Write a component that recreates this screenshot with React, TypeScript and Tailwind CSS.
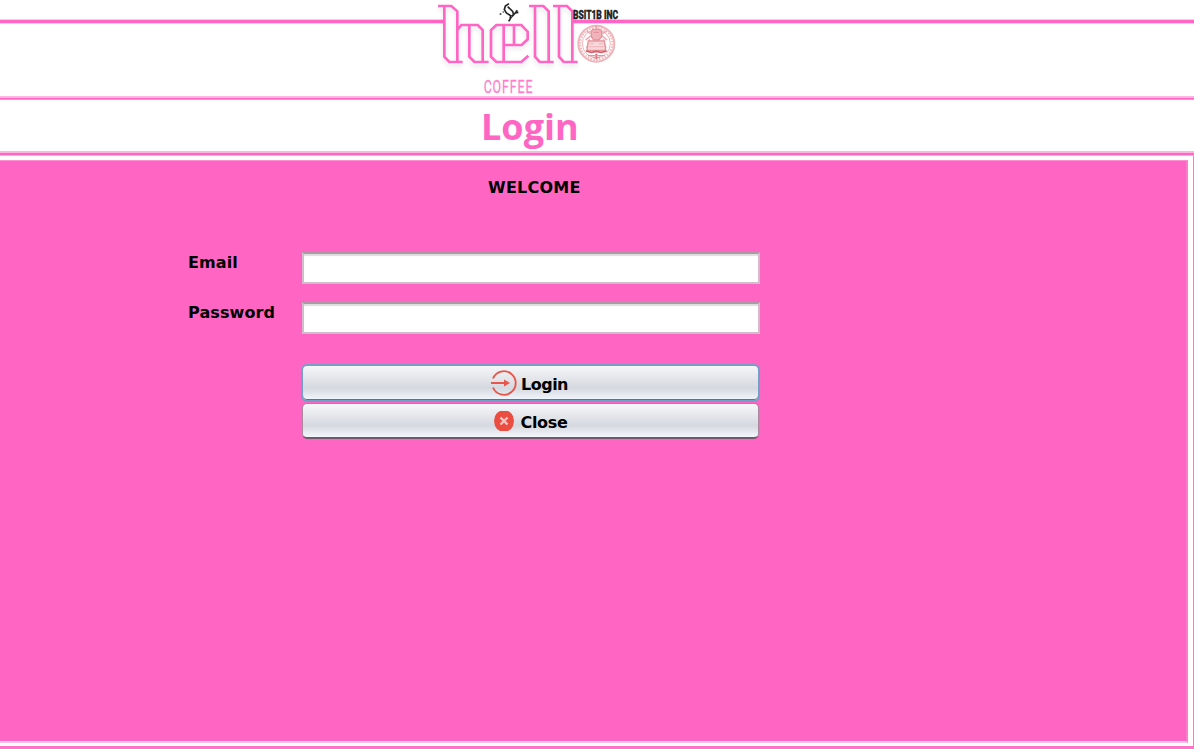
import React from 'react';

function Logo() {
  return (
    <svg className="absolute left-[430px] top-0 h-24 w-[200px] overflow-visible" viewBox="0 0 600 288" fill="none">
      <defs>
        <filter id="logoShadow" x="-10%" y="-10%" width="120%" height="130%">
          <feDropShadow dx="0" dy="10" stdDeviation="6" floodColor="#000" floodOpacity="0.09" />
        </filter>
      </defs>
      <g stroke="#ff66c4" strokeWidth="8" filter="url(#logoShadow)">
        <path d="M24 18H64L82 34V186M43 18V170L58 186H98M82 90L94 75H143L158 90V186M118 75V170L133 186H176" />
        <path d="M295 167L274 186H199L183 170V90L199 75H274L293 95V118L275 135H221M221 75V186M252 75V135" />
        <path d="M297 18H340L356 34V186M315 18V170L329 186H371" />
        <path d="M369 18H411L427 34V186M387 18V170L401 186H443" />
      </g>
      <g stroke="#252525" strokeWidth="5">
        <path d="M237 11L226 18L223 29L229 39L242 47L241 56L236 64" />
        <path d="M233 20L248 34L251 44L240 55M244 49L254 41L262 31M255 39L265 37" />
        <path d="M209 42H214M218 36H221" />
      </g>
      <text x="429" y="57" fill="#202020" stroke="#202020" strokeWidth="1.4" fontFamily="Roboto, sans-serif" fontWeight="800" fontSize="36" textLength="135" lengthAdjust="spacingAndGlyphs">BSIT1B INC</text>
      <text x="161" y="278" fill="#ff7dcc" stroke="#ff7dcc" strokeWidth="0.8" fontFamily="Roboto, sans-serif" fontWeight="400" fontSize="57" letterSpacing="4" textLength="149" lengthAdjust="spacingAndGlyphs">COFFEE</text>
      <g stroke="#e6949c">
        <circle cx="499" cy="131" r="54" strokeWidth="6" opacity="0.7" />
        <circle cx="499" cy="131" r="49" stroke="#f4bdc2" strokeWidth="8" strokeDasharray="5 4" />
        <circle cx="499" cy="131" r="42" strokeWidth="3" opacity="0.7" />
        <path d="M484 94L489 88H509L515 94V110L507 120H491L484 110ZM491 97H507" fill="#f0b3b9" strokeWidth="4" />
        <path d="M483 107L467 120M515 107L531 120M479 118L470 145M519 118L528 145M499 76V87M470 93L482 101M529 93L516 101" strokeWidth="5" opacity="0.7" />
        <path d="M475 123H523L527 151H471Z" fill="#f8d7da" strokeWidth="4" />
        <path d="M479 131H491M507 131H519M477 140H521" strokeWidth="3" opacity="0.5" />
        <path d="M468 153L484 157L499 154L514 157L530 153M499 161V178" stroke="#d75b69" strokeWidth="5" />
        <path d="M474 167H524M488 173H510" strokeWidth="4" />
      </g>
    </svg>
  );
}

function LoginIcon() {
  return (
    <svg className="h-[26px] w-[26px]" viewBox="0 0 26 26" fill="none" stroke="#ea5549" strokeWidth="1.9">
      <path d="M2 8.5A11.8 11.8 0 1 1 2 17.5M0 13H17" />
      <path d="M13 9.5L19 13L13 16.5Z" fill="#ea5549" stroke="none" />
    </svg>
  );
}

function CloseIcon() {
  return (
    <svg className="h-[26px] w-[26px]" viewBox="0 0 26 26">
      <path d="M9 3H17L20 5L22 8L23 13L22 18L20 21L17 23H9L6 21L4 18L3 13L4 8L6 5Z" fill="#e94e41" />
      <path d="M9.5 9.5L16.5 16.5M16.5 9.5L9.5 16.5" stroke="#f6c5c3" strokeWidth="2.4" />
    </svg>
  );
}

function Field({ label, type }: { label: string; type: string }) {
  return (
    <label className="flex h-8">
      <span className="w-[114px] pt-px leading-[19px] tracking-[0.1px]">{label}</span>
      <input
        type={type}
        className="h-8 w-[458px] border-2 border-[#d1bcca] border-t-[#a99aa4] bg-white px-2 shadow-[inset_0_2px_1px_#dddddd] outline-none"
      />
    </label>
  );
}

export default function App() {
  return (
    <div className="flex h-[749px] w-[1194px] flex-col overflow-hidden bg-white font-['DejaVu_Sans',sans-serif] text-[16px] font-bold text-black">
      <header className="relative h-[96px] shrink-0 pt-[19px]">
        <div className="flex justify-between">
          <div className="h-[5px] w-[444px] border-y border-[#ffc9ea] bg-[#ff66c4]" />
          <div className="h-[5px] w-[622px] border-y border-[#ffc9ea] bg-[#ff66c4]" />
        </div>
        <Logo />
      </header>
      <div className="h-1 shrink-0 border-b border-t-2 border-b-[#ff8fd3] border-t-[#ffb5e1] bg-[#ff66c4]" />
      <div className="h-[51px] shrink-0 pl-[481px]">
        <h1 className="pt-px font-['Open_Sans',sans-serif] text-[36px] leading-[51px] text-[#ff66c4]">Login</h1>
      </div>
      <div className="h-[5px] shrink-0 border-b border-t-2 border-b-[#ffafdf] border-t-[#ffb5e1] bg-[#ff66c4]" />
      <div className="flex flex-1 flex-col border-b-[3px] border-r border-[#ff76c9] pr-[5px] pt-[4px]">
        <main className="h-[583px] border-b-2 border-r-2 border-t border-b-[#ffc6e8] border-r-[#ff7ccb] border-t-[#ff8ed2] bg-[#ff66c4]">
          <h2 className="mt-[17px] pl-[488px] leading-[19px] tracking-[0.25px]">WELCOME</h2>
          <form className="flex flex-col pl-[188px] pt-[55px]" onSubmit={(e) => e.preventDefault()}>
            <Field label="Email" type="email" />
            <div className="h-[18px]" />
            <Field label="Password" type="password" />
            <div className="ml-[113px] mt-[30px] flex w-[459px] flex-col">
              <button className="flex h-[38px] items-center justify-center rounded-[6px] border-2 border-[#739fc9] bg-linear-to-b from-[#f6f7f9] via-[#d5d8df] via-65% to-[#f3f6fd] pr-[2px] shadow-[inset_0_-1px_0_#68707b]">
                <LoginIcon />
                <span className="ml-1 mt-[3px] tracking-[-0.5px]">Login</span>
              </button>
              <button className="ml-px mt-px flex h-[36px] w-[457px] items-center justify-center rounded-[5px] border border-b-2 border-[#a48a9c] border-b-[#6b5d68] bg-linear-to-b from-[#f7f8fa] via-[#d5d8df] via-65% to-[#f3f6fd] pr-[2px]">
                <CloseIcon />
                <span className="ml-[3px] mt-[4px] tracking-[-0.3px]">Close</span>
              </button>
            </div>
          </form>
        </main>
      </div>
    </div>
  );
}
